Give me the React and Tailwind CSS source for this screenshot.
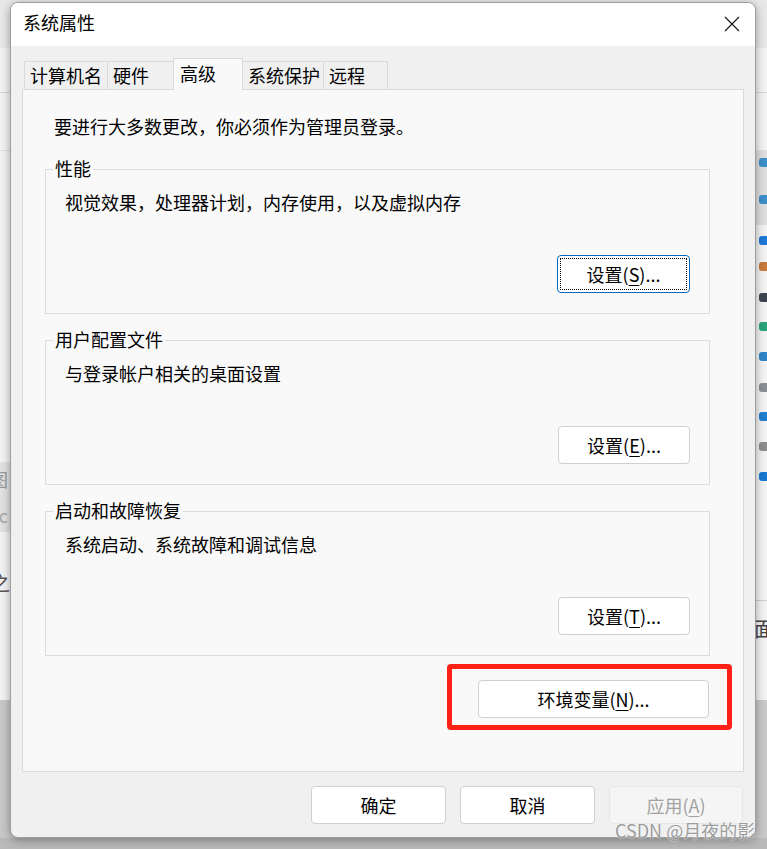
import React from 'react';

const FONT = { fontFamily: '"Noto Sans CJK SC", "Noto Sans", "Liberation Sans", sans-serif' };

// 对话框按钮
const Btn = ({ children, width = 'w-[132px]', focused = false, disabled = false }) => (
  <button
    type="button"
    className={`relative flex h-[38px] ${width} items-center justify-center rounded-[4px] border text-[18px] leading-none ${
      focused
        ? 'border-[#0067c0] bg-white text-black'
        : disabled
        ? 'border-[#e6e6e6] bg-[#f5f5f5] text-[#a2a2a2]'
        : 'border-[#d0d0d0] bg-white text-black'
    }`}
  >
    {focused && <span className="pointer-events-none absolute inset-[2px] border border-dotted border-black" />}
    <span className="-mt-[1px]">{children}</span>
  </button>
);

const Key = ({ k }) => <span className="underline underline-offset-[3px] decoration-1">{k}</span>;

const Group = ({ title, text, button }) => (
  <div className="relative flex h-[145px] flex-col border border-[#dcdcdc]">
    <span className="absolute left-[7px] top-[-14px] bg-[#f9f9f9] px-[2px] text-[18px] leading-[24px]">{title}</span>
    <p className="pl-[19px] pt-[20px] text-[18px] leading-[24px]">{text}</p>
    <div className="mt-auto flex justify-end pb-[20px] pr-[19px]">{button}</div>
  </div>
);

const tabs = [
  { name: '计算机名', w: 'w-[84px]' },
  { name: '硬件', w: 'w-[67px]' },
  { name: '高级', w: 'w-[70px]', active: true },
  { name: '系统保护', w: 'w-[82px]' },
  { name: '远程', w: 'w-[65px]' },
];

const sideIcons = [
  { y: 'top-[158px]', c: 'bg-[#3b8fc9]' },
  { y: 'top-[195px]', c: 'bg-[#3b8fc9]' },
  { y: 'top-[236px]', c: 'bg-[#1e78d6]' },
  { y: 'top-[262px]', c: 'bg-[#c97a3a]' },
  { y: 'top-[293px]', c: 'bg-[#3d4450]' },
  { y: 'top-[322px]', c: 'bg-[#2aa67a]' },
  { y: 'top-[352px]', c: 'bg-[#2f86c8]' },
  { y: 'top-[383px]', c: 'bg-[#8a8f96]' },
  { y: 'top-[412px]', c: 'bg-[#1f7fd0]' },
  { y: 'top-[442px]', c: 'bg-[#8c8c8c]' },
  { y: 'top-[472px]', c: 'bg-[#1877d2]' },
];

export default function App() {
  return (
    <div className="relative h-[849px] w-[767px] overflow-hidden bg-[#f3f3f3] text-black" style={FONT}>
      {/* 背景窗口的边缘 */}
      <div className="absolute left-0 top-0 h-[48px] w-[767px] bg-[#e8e8e8]" />
      <div className="absolute left-0 top-[92px] h-px w-[767px] bg-[#d6d6d6]" />
      <div className="absolute left-0 top-[150px] h-px w-[767px] bg-[#dedede]" />
      <div className="absolute left-0 top-[462px] h-[70px] w-[12px] bg-[#e2e2e2]" />
      <span className="absolute left-[-10px] top-[466px] text-[18px] text-[#9a9a9a]">图</span>
      <span className="absolute left-[-6px] top-[502px] text-[18px] text-[#a8a8a8]">.c</span>
      <span className="absolute left-[-10px] top-[568px] text-[20px] text-[#555]">之</span>
      <div className="absolute left-[756px] top-[150px] h-[75px] w-[11px] bg-[#dedede]" />
      {sideIcons.map((ic, i) => (
        <div key={i} className={`absolute left-[759px] ${ic.y} h-[9px] w-[12px] rounded-[3px] ${ic.c}`} />
      ))}
      <div className="absolute left-[756px] top-[600px] h-px w-[11px] bg-[#d0d0d0]" />
      <span className="absolute left-[754px] top-[614px] text-[20px] text-[#444]">面</span>
      <div className="absolute left-0 top-[700px] h-[149px] w-[767px] bg-[#c8c8c8]" />
      <div className="absolute left-0 top-[838px] h-[11px] w-[767px] bg-[#b9b9b9]" />

      {/* 系统属性 对话框 */}
      <div className="absolute left-[10px] top-[2px] flex h-[836px] w-[746px] flex-col overflow-hidden rounded-[8px] border border-[#9e9e9e] bg-[#f0f0f0] shadow-[0_2px_10px_rgba(0,0,0,0.35)]">
        <div className="flex h-[43px] shrink-0 items-center justify-between bg-white pl-[12px] pr-[15px]">
          <span className="-mt-[5px] text-[18px] leading-none">系统属性</span>
          <svg width="16" height="16" viewBox="0 0 16 16" className="-mt-[2px]">
            <path d="M1 1 L15 15 M15 1 L1 15" stroke="#1a1a1a" strokeWidth="1.2" fill="none" />
          </svg>
        </div>

        <div className="flex flex-1 flex-col px-[11px] pt-[12px]">
          {/* 标签页 */}
          <div className="flex h-[31px] items-end pl-[2px]">
            {tabs.map((t) => (
              <div
                key={t.name}
                className={`-ml-px flex ${t.w} items-center border border-b-0 border-[#dadada] text-[18px] leading-none first:ml-0 ${
                  t.active
                    ? 'relative z-10 -mb-px h-[32px] bg-[#f9f9f9] pb-[4px] pl-[6px]'
                    : 'h-[28px] bg-[#f0f0f0] pb-[2px] pl-[5px]'
                }`}
              >
                {t.name}
              </div>
            ))}
          </div>

          {/* 高级 页面 */}
          <div className="flex h-[683px] flex-col border border-[#dadada] bg-[#f9f9f9]">
            <p className="pl-[31px] pt-[24px] text-[18px] leading-[24px]">要进行大多数更改，你必须作为管理员登录。</p>

            <div className="ml-[22px] mt-[31px] flex w-[665px] flex-col gap-[26px]">
              <Group
                title="性能"
                text="视觉效果，处理器计划，内存使用，以及虚拟内存"
                button={
                  <Btn width="w-[133px]" focused>
                    设置(<Key k="S" />)...
                  </Btn>
                }
              />
              <Group
                title="用户配置文件"
                text="与登录帐户相关的桌面设置"
                button={
                  <Btn>
                    设置(<Key k="E" />)...
                  </Btn>
                }
              />
              <Group
                title="启动和故障恢复"
                text="系统启动、系统故障和调试信息"
                button={
                  <Btn>
                    设置(<Key k="T" />)...
                  </Btn>
                }
              />
            </div>

            <div className="ml-[22px] mt-[24px] flex w-[665px] justify-end pr-[1px]">
              <Btn width="w-[231px]">
                环境变量(<Key k="N" />)...
              </Btn>
            </div>
          </div>

          {/* 底部按钮 */}
          <div className="mt-[14px] flex justify-end gap-[14px] pr-[1px]">
            <Btn width="w-[135px]">确定</Btn>
            <Btn width="w-[135px]">取消</Btn>
            <Btn width="w-[134px]" disabled>
              应用(<Key k="A" />)
            </Btn>
          </div>
        </div>
      </div>

      {/* 红色标注框 */}
      <div className="pointer-events-none absolute left-[447px] top-[664px] h-[66px] w-[285px] rounded-[4px] border-[5px] border-[#fe2216]" />

      {/* 水印 */}
      <span className="pointer-events-none absolute left-[615px] top-[818px] text-[18px] leading-[24px] text-[#9c9c9c] [text-shadow:0_0_2px_#fff]">
        CSDN @月夜的影
      </span>
    </div>
  );
}
